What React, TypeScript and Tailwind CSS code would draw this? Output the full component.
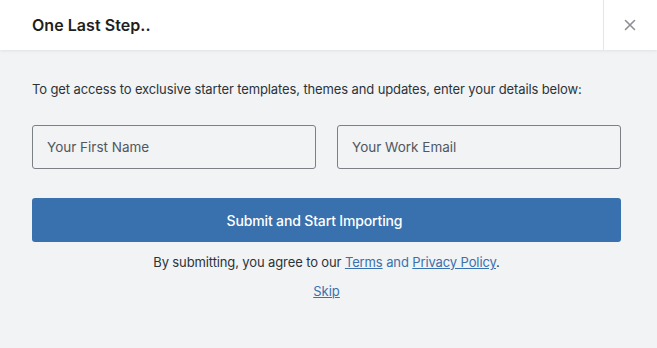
import React from "react";

export default function App() {
  return (
    <div className="w-[657px] h-[348px] bg-[#f1f3f5] flex flex-col" style={{ fontFamily: "Inter, 'Liberation Sans', sans-serif" }}>
      <div className="h-[50px] bg-white flex items-stretch shadow-[0_1px_3px_rgba(0,0,0,0.08)] relative z-10">
        <div className="flex-1 flex items-center pl-8">
          <h1 className="text-[16px] font-semibold text-[#1e1e1e] tracking-[0.05px]">One Last Step..</h1>
        </div>
        <div className="w-[54px] border-l border-[#e6e6e6] flex items-center justify-center pr-[2px]">
          <svg width="12" height="12" viewBox="0 0 12 12" className="text-[#8c8f94]">
            <path d="M1.5 1.5 L10.5 10.5 M10.5 1.5 L1.5 10.5" stroke="currentColor" strokeWidth="1.6" strokeLinecap="round" />
          </svg>
        </div>
      </div>
      <div className="pl-8 pr-9 pt-[31px]">
        <p className="text-[13px] text-[#2c3338] leading-[16px] tracking-[-0.12px]">
          To get access to exclusive starter templates, themes and updates, enter your details below:
        </p>
        <div className="flex gap-[21px] mt-[28px]">
          <div className="flex-1 h-[44px] border border-[#7c7f84] rounded-[3px] flex items-center px-[14px] text-[13.5px] text-[#50575e]">
            Your First Name
          </div>
          <div className="flex-1 h-[44px] border border-[#7c7f84] rounded-[3px] flex items-center px-[14px] text-[13.5px] text-[#50575e]">
            Your Work Email
          </div>
        </div>
        <button className="mt-[29px] w-full h-[44px] bg-[#3871ad] rounded-[3px] text-white text-[14px] font-medium tracking-[-0.15px] flex items-center justify-center pr-6">
          Submit and Start Importing
        </button>
        <p className="mt-[12px] text-center text-[13px] text-[#2c3338] leading-[16px] tracking-[-0.12px]">
          By submitting, you agree to our{" "}
          <span className="text-[#3871ad] underline">Terms</span>{" "}
          <span className="text-[#3871ad]">and</span>{" "}
          <span className="text-[#3871ad] underline">Privacy Policy</span>.
        </p>
        <p className="mt-[13px] text-center text-[13px] leading-[16px]">
          <span className="text-[#3871ad] underline">Skip</span>
        </p>
      </div>
    </div>
  );
}
